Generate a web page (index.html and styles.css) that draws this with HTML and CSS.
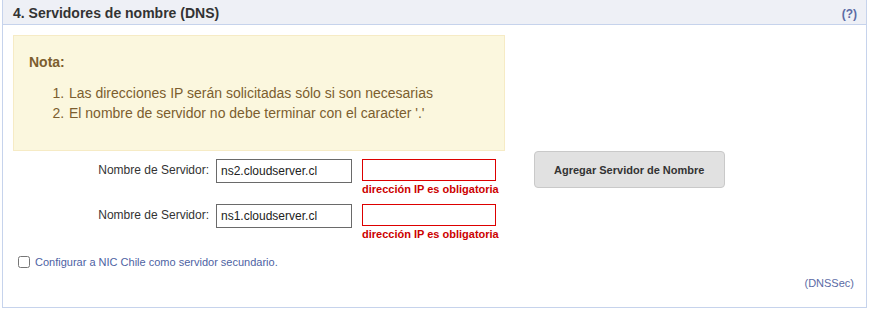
FILE: index.html
```html
<!DOCTYPE html>
<html>
<head lang="es">
    <meta charset="UTF-8">
    <title>Servidores de nombre</title>
    <link rel="stylesheet" href="styles.css">
</head>
<body>
<div class="panel">
    <div class="panel-head">
        <h2>4. Servidores de nombre (DNS)</h2>
        <a class="help" href="#">(?)</a>
    </div>
    <div class="panel-body">
        <div class="note">
            <h3>Nota:</h3>
            <ol>
                <li>Las direcciones IP serán solicitadas sólo si son necesarias</li>
                <li>El nombre de servidor no debe terminar con el caracter '.'</li>
            </ol>
        </div>
        <div class="servers">
            <div class="fields">
                <div class="row">
                    <label>Nombre de Servidor:</label>
                    <input class="host" type="text" value="ns2.cloudserver.cl">
                    <div class="ip">
                        <input class="ip-input" type="text">
                        <span class="error">dirección IP es obligatoria</span>
                    </div>
                </div>
                <div class="row">
                    <label>Nombre de Servidor:</label>
                    <input class="host" type="text" value="ns1.cloudserver.cl">
                    <div class="ip">
                        <input class="ip-input" type="text">
                        <span class="error">dirección IP es obligatoria</span>
                    </div>
                </div>
            </div>
            <button class="add">Agregar Servidor de Nombre</button>
        </div>
        <label class="secondary"><input type="checkbox"> Configurar a NIC Chile como servidor secundario.</label>
        <div class="foot"><a href="#">(DNSSec)</a></div>
    </div>
</div>
</body>
</html>
```

FILE: styles.css
```css
*{
    margin: 0;
    padding: 0;
    box-sizing: border-box;
}
body{
    font-family: "Liberation Sans", Arial, sans-serif;
    color: #333;
    background: #fff;
}
a{
    text-decoration: none;
}
.panel{
    width: 865px;
    height: 308px;
    margin-left: 2px;
    border: 1px solid #c6d3ec;
    border-top: none;
}
.panel-head{
    height: 25px;
    background: #eef0f6;
    border-bottom: 1px solid #c6d3ec;
    display: flex;
    align-items: center;
    justify-content: space-between;
    padding: 0 9px 0 10px;
}
.panel-head h2{
    font-size: 14px;
    font-weight: bold;
    color: #333;
    padding-top: 2px;
}
.help{
    font-size: 12px;
    font-weight: bold;
    color: #5b6ba5;
    padding-top: 4px;
}
.panel-body{
    padding: 10px 12px 0 10px;
}
.note{
    width: 492px;
    height: 116px;
    background: #fbf7de;
    border: 1px solid #f6ebc5;
    color: #7c5e2f;
    padding: 18px 16px 0 15px;
}
.note h3{
    font-size: 14px;
    font-weight: bold;
    line-height: 17px;
}
.note ol{
    margin-top: 12px;
    padding-left: 39px;
    font-size: 14px;
    line-height: 20px;
}
.note li{
    padding-left: 1px;
}
.servers{
    display: flex;
    align-items: flex-start;
}
.fields{
    padding-top: 8px;
}
.row{
    display: flex;
    align-items: flex-start;
    height: 45px;
}
.row label{
    width: 196px;
    text-align: right;
    font-size: 12px;
    color: #333;
    line-height: 23px;
}
.host{
    width: 136px;
    height: 24px;
    margin-left: 7px;
    border: 1px solid #6a6a6a;
    padding: 0 4px;
    font-family: "Liberation Sans", Arial, sans-serif;
    font-size: 12px;
    color: #222;
}
.ip{
    display: flex;
    flex-direction: column;
    margin-left: 10px;
}
.ip-input{
    width: 134px;
    height: 22px;
    border: 1px solid #dd0000;
}
.error{
    font-size: 11px;
    font-weight: bold;
    color: #cc0000;
    line-height: 14px;
    margin-top: 1px;
}
.add{
    width: 191px;
    height: 37px;
    margin-left: 35px;
    background: #e1e1e1;
    border: 1px solid #c9c9c9;
    border-radius: 4px;
    font-family: "Liberation Sans", Arial, sans-serif;
    font-size: 11px;
    font-weight: bold;
    color: #333;
}
.secondary{
    display: flex;
    align-items: center;
    margin-top: 7px;
    padding-left: 5px;
    font-size: 11px;
    color: #4d62a3;
}
.secondary input{
    width: 12px;
    height: 12px;
    margin-right: 5px;
}
.foot{
    text-align: right;
    margin-top: 9px;
    font-size: 11px;
}
.foot a{
    color: #5b6ba5;
}
```
